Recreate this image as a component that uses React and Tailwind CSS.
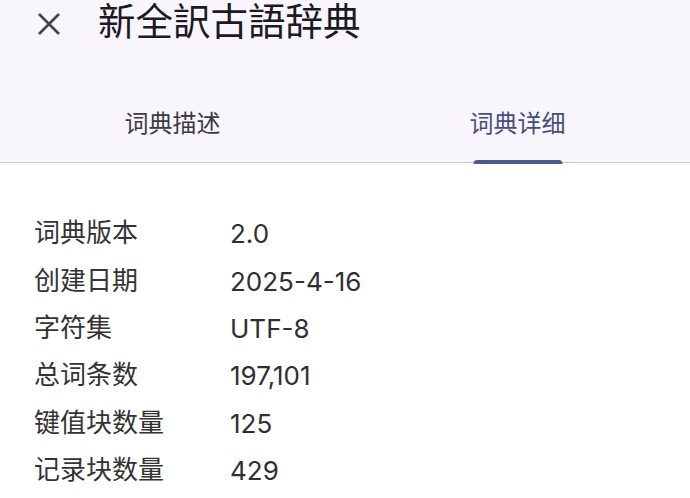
import React from "react";

const rows = [
  ["词典版本", "2.0"],
  ["创建日期", "2025-4-16"],
  ["字符集", "UTF-8"],
  ["总词条数", "197,101"],
  ["键值块数量", "125"],
  ["记录块数量", "429"],
];

export default function App() {
  const font = { fontFamily: 'Roboto, "Noto Sans CJK SC", sans-serif' };
  return (
    <div className="w-[690px] h-[498px] overflow-hidden bg-white" style={font}>
      <div className="bg-[#f8f6fc]">
        <div className="h-[48px] flex items-center">
          <div className="w-[98px] pl-[36px] flex items-center">
            <svg width="26" height="26" viewBox="0 0 26 26" className="text-[#444]">
              <path d="M3 3 L23 23 M23 3 L3 23" stroke="currentColor" strokeWidth="2.6" strokeLinecap="butt" />
            </svg>
          </div>
          <div className="text-[37.5px] leading-none text-[#1c1b1f] pb-[2px]">新全訳古語辞典</div>
        </div>
        <div className="h-[37px]" />
        <div className="flex h-[78px] border-b-[1.5px] border-[#c8c8cc]">
          <div className="flex-1 flex items-center justify-center text-[24px] text-[#3a3a3f]">词典描述</div>
          <div className="flex-1 relative flex items-center justify-center text-[24px] text-[#45507a]">
            词典详细
            <div className="absolute bottom-[-2px] left-1/2 -translate-x-1/2 w-[89px] h-[4px] rounded-t-[4px] bg-[#4b5a8c]" />
          </div>
        </div>
      </div>
      <div className="pt-[47px] pl-[34px]">
        {rows.map(([k, v]) => (
          <div key={k} className="h-[47.4px] flex items-center text-[26px] text-[#333]">
            <div className="w-[196px]">{k}</div>
            <div className="text-[26px] proportional-nums text-[#2f2f2f]" style={{ fontFamily: 'Inter, "Noto Sans CJK SC", sans-serif' }}>{v}</div>
          </div>
        ))}
      </div>
    </div>
  );
}
